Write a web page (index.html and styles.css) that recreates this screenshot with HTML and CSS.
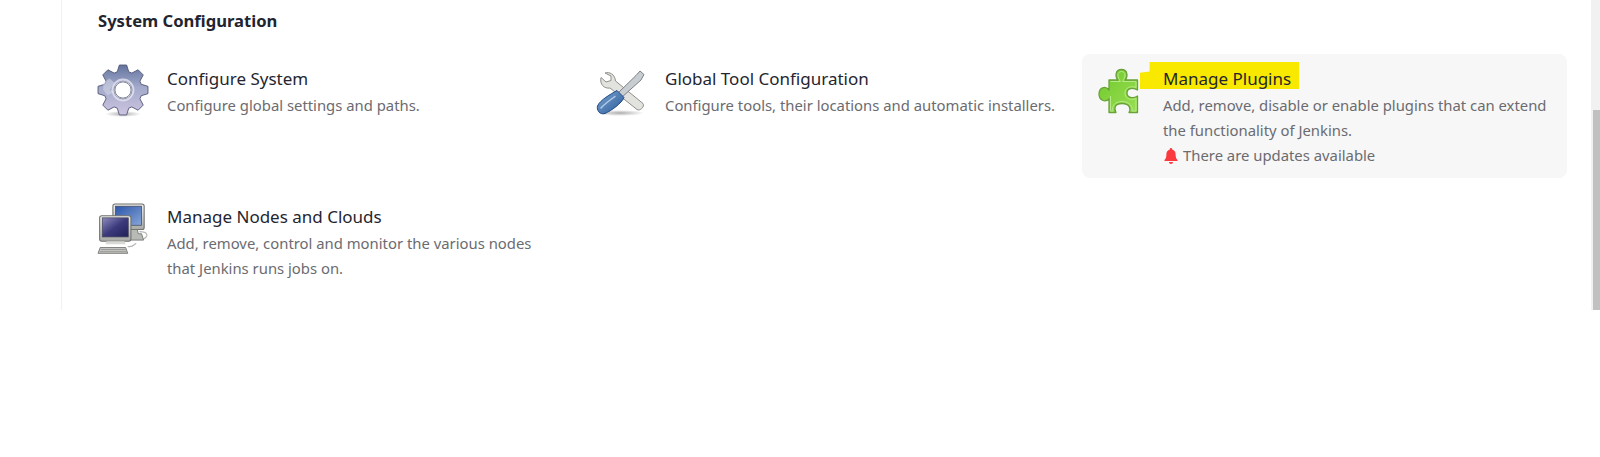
FILE: index.html
```html
<!DOCTYPE html>
<html lang="en">
<head>
<meta charset="utf-8">
<title>Manage Jenkins</title>
<link rel="stylesheet" href="styles.css">
</head>
<body>
<div class="viewport">
  <main class="panel">
    <h2 class="section-title">System Configuration</h2>
    <div class="grid">
      <a class="card">
        <svg class="icon" viewBox="0 0 48 48">
          <defs>
            <linearGradient id="gearFill" x1="0" y1="0" x2="0" y2="1">
              <stop offset="0" stop-color="#64749f"/><stop offset=".45" stop-color="#a3aacb"/><stop offset="1" stop-color="#cdc5e0"/>
            </linearGradient>
            <radialGradient id="shadow"><stop offset="0" stop-color="#777" stop-opacity=".6"/><stop offset="1" stop-color="#777" stop-opacity="0"/></radialGradient>
          </defs>
          <ellipse cx="25" cy="46" rx="18" ry="3" fill="url(#shadow)"/>
          <g transform="translate(25 22) scale(1.04)">
            <path fill="url(#gearFill)" fill-rule="evenodd" stroke="#565b7a" stroke-width=".9" stroke-linejoin="round" d="M-5.500-17.500-3.500-24H3.500L5.500-17.500 8.490-16.260 14.500-19.450 19.450-14.500 16.260-8.490 17.500-5.500 24-3.500V3.500L17.500 5.500 16.260 8.490 19.450 14.500 14.500 19.450 8.490 16.260 5.500 17.500 3.500 24H-3.500L-5.500 17.500-8.490 16.260-14.500 19.450-19.450 14.500-16.260 8.490-17.500 5.500-24 3.500V-3.500L-17.500-5.500-16.260-8.490-19.450-14.500-14.500-19.450-8.490-16.260ZM0-9A9 9 0 1 0 0 9 9 9 0 1 0 0-9Z"/>
            <path fill="#d5d8e6" opacity=".55" d="M-19-7-13-11-8-7-13 0-8 2-15 5-19 0Z"/>
            <circle r="10" fill="none" stroke="#e2e2f0" stroke-width="2" opacity=".85"/>
            <circle r="7.800" fill="#fff" stroke="#5d6285" stroke-width=".8"/>
          </g>
        </svg>
        <div class="text">
          <div class="item-title">Configure System</div>
          <div class="desc">Configure global settings and paths.</div>
        </div>
      </a>
      <a class="card">
        <svg class="icon" viewBox="0 0 48 48">
          <defs>
            <linearGradient id="blue" x1="0" y1="0" x2="1" y2="1">
              <stop offset="0" stop-color="#7ea6d0"/><stop offset="1" stop-color="#2a5a9b"/>
            </linearGradient>
          </defs>
          <ellipse cx="24" cy="45" rx="24" ry="3" fill="url(#shadow)"/>
          <path fill="#e2e2de" stroke="#8f8f8b" stroke-width="1" stroke-linejoin="round" d="M9 5C13 3.500 19 6 19.500 13L47 35.500C49 38.500 44 43.500 41 41.500L14 20C8 21 3.500 16 5 9.500L10 14 15 12.500 15 8Z"/>
          <path fill="#c8cdd2" stroke="#7b8187" stroke-width="1" stroke-linejoin="round" d="M44 3 48 6.500 45 12 25 30 21 26 40 7.500Z"/>
          <path fill="url(#blue)" stroke="#204a87" stroke-width="1" stroke-linejoin="round" d="M21 22.500 28 29.500C26 35 15 43 9 45.500 3.500 47 .5 42 1.500 38 4 32 15 26 21 22.500Z"/>
          <path fill="none" stroke="#b3cce7" stroke-width="1.500" stroke-linecap="round" d="M5 40C9 35.500 14 32 19 28.500"/>
        </svg>
        <div class="text">
          <div class="item-title">Global Tool Configuration</div>
          <div class="desc">Configure tools, their locations and automatic installers.</div>
        </div>
      </a>
      <a class="card card-active">
        <svg class="icon" viewBox="0 0 48 48">
          <defs>
            <linearGradient id="puzzle" x1="0" y1="0" x2="1" y2="1">
              <stop offset="0" stop-color="#6fc92a"/><stop offset="1" stop-color="#9ade55"/>
            </linearGradient>
          </defs>
          <path fill="url(#puzzle)" stroke="#6aa13a" stroke-width="1.300" stroke-linejoin="round" d="M15 12H24C21 9 21 1.500 27.500 1.500 34 1.500 34 9 31 12H43.500V22C39 19 33 20 33 25 33 30 39 31 43.500 28V44.500H35C37 41 36 35.500 28 35.500 20 35.500 20 41 22 44.500H15V31C11 35 5 32 5 26 5 20 11 17 15 22Z"/>
          <path fill="none" stroke="#b6ea84" stroke-width="1" stroke-linejoin="round" d="M16.500 13.500H26.500C23 9 23 3.500 27.500 3.500 32 3.500 32 9 28.500 13.500H42V19.500C37 17.500 31 19.500 31 25 31 31 37 32.500 42 30.500V43H38C39 39 36 33.500 28 33.500 20 33.500 17.500 39 19 43H16.500V28"/>
        </svg>
        <div class="text">
          <div class="item-title">
            <span class="highlight"></span>
            <span class="title-label">Manage Plugins</span>
          </div>
          <div class="desc">Add, remove, disable or enable plugins that can extend the functionality of Jenkins.</div>
          <div class="desc notice">
            <svg class="bell" viewBox="0 0 16 16"><path fill="#fb3a3f" d="M8 0C7.200 0 6.800.6 6.800 1.400 4.600 2 3.400 3.800 3.400 6.200 3.400 9.500 2.700 10.700 1.500 12V13H14.500V12C13.300 10.700 12.600 9.500 12.600 6.200 12.600 3.800 11.400 2 9.200 1.400 9.200.6 8.800 0 8 0ZM6 14C6 15.200 6.900 16 8 16S10 15.200 10 14Z"/></svg>
            There are updates available
          </div>
        </div>
      </a>
      <a class="card">
        <svg class="icon" viewBox="0 0 48 48">
          <defs>
            <linearGradient id="screenBack" x1="0" y1="0" x2="1" y2="1">
              <stop offset="0" stop-color="#2c56a8"/><stop offset="1" stop-color="#86a5d8"/>
            </linearGradient>
            <linearGradient id="screenFront" x1="0" y1="0" x2="1" y2="1">
              <stop offset="0" stop-color="#8f8bc0"/><stop offset=".5" stop-color="#3c3a7c"/><stop offset="1" stop-color="#201f58"/>
            </linearGradient>
            <linearGradient id="case" x1="0" y1="0" x2="0" y2="1">
              <stop offset="0" stop-color="#eeeeec"/><stop offset="1" stop-color="#a8aaa6"/>
            </linearGradient>
          </defs>
          <g transform="translate(-1 -3) scale(1.06)">
            <path fill="none" stroke="#b5b5b2" stroke-width="1" d="M40 27C48 27 49 31 44 34"/>
            <rect x="15" y="1" width="29.500" height="24" rx="2" fill="url(#case)" stroke="#6f716d"/>
            <rect x="17.500" y="3" width="24.500" height="18" fill="url(#screenBack)" stroke="#45485a" stroke-width=".7"/>
            <path fill="#b8bab6" stroke="#6f716d" stroke-width=".8" d="M22 25H38L39 29H42L44 35H31L30 30H21Z"/>
            <path fill="none" stroke="#b5b5b2" stroke-width="1" d="M29 41C34 42 35 39 37 38"/>
            <rect x="2.500" y="12" width="29.500" height="24" rx="2" fill="url(#case)" stroke="#6f716d"/>
            <rect x="5" y="14" width="24.500" height="18" fill="url(#screenFront)" stroke="#45485a" stroke-width=".7"/>
            <path fill="#d8d8d4" d="M9 36H26L27 39H8Z"/>
            <path fill="#c8c9c6" stroke="#6f716d" stroke-width=".8" d="M3 42H27L29 47.500H1Z"/>
            <path fill="none" stroke="#8b8d89" stroke-width=".8" d="M3.500 44H27M2.500 46H28"/>
          </g>
        </svg>
        <div class="text">
          <div class="item-title">Manage Nodes and Clouds</div>
          <div class="desc">Add, remove, control and monitor the various nodes that Jenkins runs jobs on.</div>
        </div>
      </a>
    </div>
  </main>
  <div class="scrollbar"><div class="thumb"></div></div>
</div>
</body>
</html>
```

FILE: styles.css
```css
* { box-sizing: border-box; }
html, body { margin: 0; height: 100%; background: #fff; overflow: hidden; }
body {
  font-family: "Noto Sans", "Open Sans", sans-serif;
  color: #222;
}
.viewport {
  display: flex;
  justify-content: space-between;
  align-items: flex-start;
  height: 457px;
  padding-left: 61px;
}
.panel {
  width: 1520px;
  height: 310px;
  border-left: 1px solid #f1f1f1;
  padding: 8px 0 0 36px;
}
.section-title {
  margin: 0;
  font-size: 16.6px;
  line-height: 26px;
  font-weight: 700;
  color: #222430;
}
.grid {
  display: grid;
  grid-template-columns: repeat(3, 485px);
  column-gap: 13px;
  row-gap: 14px;
  margin-top: 20px;
  margin-left: -12px;
  align-items: start;
}
.card {
  display: flex;
  gap: 21px;
  padding: 14px 12px 10px;
  border-radius: 8px;
}
.card-active { background: #f7f7f7; }
.icon { width: 48px; height: 48px; flex: none; overflow: visible; }
.text { min-width: 0; }
.item-title {
  position: relative;
  font-size: 17px;
  line-height: 22px;
  color: #24252f;
  margin-bottom: 3px;
}
.title-label { position: relative; }
.highlight {
  position: absolute;
  left: -23px;
  top: -6px;
  width: 159px;
  height: 27px;
  background: #f9e900;
  clip-path: polygon(6% 0, 100% 0, 100% 100%, 0 100%, 0 40%, 6% 35%);
}
.desc {
  font-size: 14.85px;
  line-height: 25px;
  color: #6b6b70;
}
.notice { display: flex; align-items: center; gap: 4px; }
.bell { width: 16px; height: 16px; flex: none; }
.scrollbar {
  width: 9px;
  height: 310px;
  background: #f1f1f1;
  padding: 110px 0 0 2px;
}
.thumb { height: 200px; background: #c1c1c1; }
```
